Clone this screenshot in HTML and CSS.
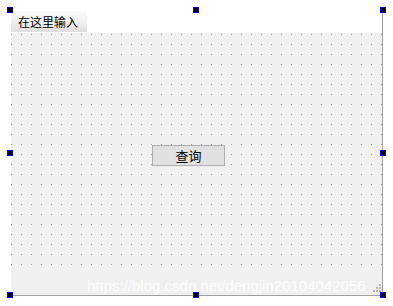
FILE: index.html
```html
<!DOCTYPE html>
<html>
<head>
<meta charset="utf-8">
<link rel="stylesheet" href="styles.css">
</head>
<body>
<div class="canvas">
  <div class="window">
    <div class="menubar"><div class="menu-item">在这里输入</div></div>
    <div class="central">
      <div class="button">查询</div>
    </div>
    <div class="statusbar">
      <span class="watermark">https://blog.csdn.net/dengjin20104042056</span>
      <svg class="grip" width="10" height="10" viewBox="0 0 10 10">
        <rect x="8" y="0" width="2" height="2" fill="#b4b4b4"/>
        <rect x="5" y="3" width="2" height="2" fill="#b4b4b4"/>
        <rect x="8" y="3" width="2" height="2" fill="#b4b4b4"/>
        <rect x="2" y="6" width="2" height="2" fill="#b4b4b4"/>
        <rect x="5" y="6" width="2" height="2" fill="#b4b4b4"/>
        <rect x="8" y="6" width="2" height="2" fill="#b4b4b4"/>
      </svg>
    </div>
  </div>
  <div class="handle h-tl"></div>
  <div class="handle h-tm"></div>
  <div class="handle h-tr"></div>
  <div class="handle h-ml"></div>
  <div class="handle h-mr"></div>
  <div class="handle h-bl"></div>
  <div class="handle h-bm"></div>
  <div class="handle h-br"></div>
</div>
</body>
</html>
```
FILE: styles.css
```css
html, body {
  margin: 0;
  padding: 0;
  background: #ffffff;
}
.canvas {
  position: relative;
  width: 393px;
  height: 306px;
  padding: 11px 0 0 11px;
  box-sizing: border-box;
  font-family: "Noto Sans CJK SC", "Liberation Sans", sans-serif;
}
.window {
  width: 372px;
  height: 285px;
  border-right: 1px solid #a0a0a0;
  border-bottom: 1px solid #a0a0a0;
  box-sizing: border-box;
  display: flex;
  flex-direction: column;
}
.menubar {
  height: 22px;
  background: #ffffff;
  display: flex;
  align-items: flex-start;
}
.menu-item {
  width: 76px;
  height: 21px;
  box-sizing: border-box;
  padding-left: 7px;
  font-size: 12px;
  line-height: 21px;
  color: #000;
  background: linear-gradient(#fbfbfb, #f3f3f3 45%, #dedede);
}
.central {
  position: relative;
  height: 238px;
  background-color: #f0f0f0;
  background-image: conic-gradient(from 270deg at 1px 1px, #a0a0a0 25%, transparent 0);
  background-size: 10px 10px;
  background-position: 0 1px;
}
.button {
  position: absolute;
  left: 141px;
  top: 112px;
  width: 73px;
  height: 21px;
  box-sizing: border-box;
  border: 1px solid #adadad;
  background: #e1e1e1;
  font-size: 13px;
  line-height: 19px;
  text-align: center;
  color: #000;
}
.statusbar {
  flex: 1;
  background: #f0f0f0;
  display: flex;
  align-items: flex-end;
  justify-content: flex-end;
  position: relative;
}
.watermark {
  position: absolute;
  left: 76px;
  bottom: 0;
  font-family: "Liberation Sans", sans-serif;
  font-size: 15px;
  line-height: 18px;
  color: rgba(255, 255, 255, 0.8);
  white-space: nowrap;
}
.grip {
  margin: 0 1px 1px 0;
  position: relative;
}
.handle {
  position: absolute;
  width: 6px;
  height: 6px;
  box-sizing: border-box;
  border: 1px solid #0000ff;
  background: #000;
}
.h-tl { left: 7px; top: 7px; }
.h-tm { left: 193px; top: 7px; }
.h-tr { left: 380px; top: 7px; }
.h-ml { left: 7px; top: 150px; }
.h-mr { left: 380px; top: 150px; }
.h-bl { left: 7px; top: 292px; }
.h-bm { left: 193px; top: 292px; }
.h-br { left: 380px; top: 292px; }
```
